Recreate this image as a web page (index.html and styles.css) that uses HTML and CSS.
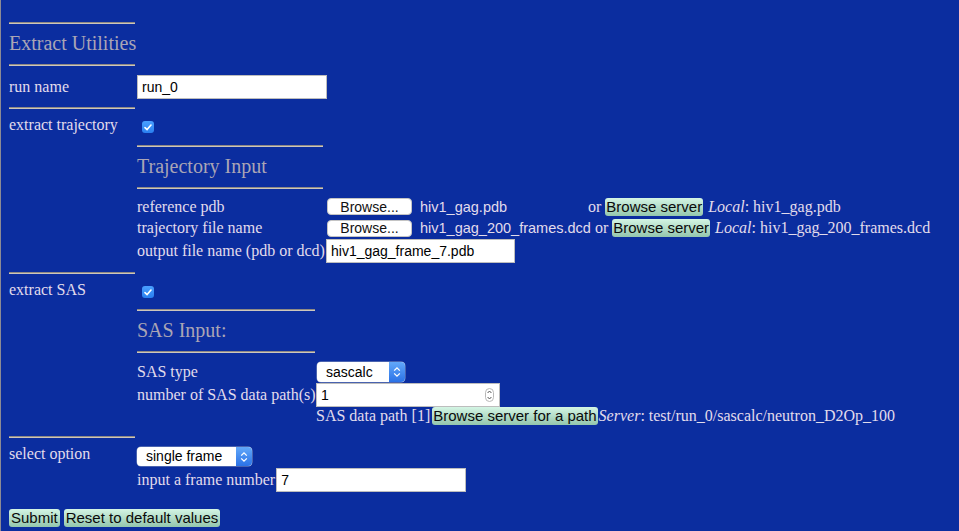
FILE: index.html
```html
<!DOCTYPE html>
<html>
<head>
<meta charset="utf-8">
<title>Extract Utilities</title>
<link rel="stylesheet" href="styles.css">
</head>
<body>
<div class="page">
  <div class="rule left"></div>
  <h1 class="title">Extract Utilities</h1>
  <div class="rule left"></div>

  <div class="row run">
    <div class="lbl">run name</div>
    <span class="txt w190">run_0</span>
  </div>
  <div class="rule left"></div>

  <div class="row sect">
    <div class="lbl top">extract trajectory</div>
    <div class="body">
      <div class="chkline"><span class="chk"><svg width="8" height="7" viewBox="0 0 8 7"><path d="M1 3.6 L3.1 5.6 L7 1" stroke="#fff" stroke-width="1.6" fill="none" stroke-linecap="round" stroke-linejoin="round"/></svg></span></div>
      <div class="rule w186"></div>
      <h2 class="title">Trajectory Input</h2>
      <div class="rule w186"></div>
      <div class="sub tsub">
        <div class="cell">reference pdb</div>
        <div class="cell">
          <span class="file"><span class="browse">Browse...</span><span class="fname">hiv1_gag.pdb</span></span>
          <span class="or">or</span><span class="gbtn">Browse server</span><span class="loc"><i>Local</i>: hiv1_gag.pdb</span>
        </div>
        <div class="cell">trajectory file name</div>
        <div class="cell">
          <span class="file"><span class="browse">Browse...</span><span class="fname">hiv1_gag_200_frames.dcd</span></span>
          <span class="or">or</span><span class="gbtn">Browse server</span><span class="loc"><i>Local</i>: hiv1_gag_200_frames.dcd</span>
        </div>
        <div class="cell">output file name (pdb or dcd)</div>
        <div class="cell"><span class="txt w189">hiv1_gag_frame_7.pdb</span></div>
      </div>
    </div>
  </div>
  <div class="rule left"></div>

  <div class="row sect">
    <div class="lbl top">extract SAS</div>
    <div class="body">
      <div class="chkline sas"><span class="chk"><svg width="8" height="7" viewBox="0 0 8 7"><path d="M1 3.6 L3.1 5.6 L7 1" stroke="#fff" stroke-width="1.6" fill="none" stroke-linecap="round" stroke-linejoin="round"/></svg></span></div>
      <div class="rule w178"></div>
      <h2 class="title">SAS Input:</h2>
      <div class="rule w178"></div>
      <div class="sub ssub">
        <div class="cell">SAS type</div>
        <div class="cell">
          <span class="sel w88"><span class="sel-t">sascalc</span><span class="sel-b"><svg width="8" height="12" viewBox="0 0 8 12"><path d="M1.2 4.6 L4 1.8 L6.8 4.6 M1.2 7.4 L4 10.2 L6.8 7.4" stroke="#fff" stroke-width="1.3" fill="none"/></svg></span></span>
        </div>
        <div class="cell">number of SAS data path(s)</div>
        <div class="cell">
          <span class="txt w184 num">1<svg class="spin" width="9" height="14" viewBox="0 0 9 14"><rect x="0.5" y="0.5" width="8" height="13" rx="4" fill="#fff" stroke="#b8b8b8"/><path d="M2.6 5 L4.5 3 L6.4 5 M2.6 9 L4.5 11 L6.4 9" stroke="#555" stroke-width="1" fill="none"/></svg></span>
        </div>
        <div class="cell"></div>
        <div class="cell">SAS data path [1]<span class="gbtn path">Browse server for a path</span><span class="loc2"><i>Server</i>: test/run_0/sascalc/neutron_D2Op_100</span></div>
      </div>
    </div>
  </div>
  <div class="rule left"></div>

  <div class="row opt">
    <div class="lbl top">select option</div>
    <div class="body">
      <span class="sel w115"><span class="sel-t">single frame</span><span class="sel-b"><svg width="8" height="12" viewBox="0 0 8 12"><path d="M1.2 4.6 L4 1.8 L6.8 4.6 M1.2 7.4 L4 10.2 L6.8 7.4" stroke="#fff" stroke-width="1.3" fill="none"/></svg></span></span>
      <div class="frame">input a frame number<span class="txt w190">7</span></div>
    </div>
  </div>

  <div class="actions">
    <span class="gbtn big">Submit</span><span class="gbtn big">Reset to default values</span>
  </div>
</div>
</body>
</html>
```

FILE: styles.css
```css
html, body {
  margin: 0;
  padding: 0;
  background: #0b2d9f;
}
body {
  font-family: "Liberation Serif", "Times New Roman", serif;
  font-size: 16px;
  line-height: 18px;
  color: #e2dcec;
}
.page {
  border-left: 1px solid #8c8a94;
  padding: 22px 0 0 8px;
  min-height: 531px;
  box-sizing: border-box;
}
.rule {
  height: 0;
  border-top: 1px solid #8f8a84;
  border-bottom: 1px solid #cdc6bc;
}
.rule.left { width: 126px; }
.rule.w186 { width: 186px; }
.rule.w178 { width: 178px; }

.title {
  margin: 0;
  font-weight: normal;
  font-size: 20px;
  line-height: 24px;
  height: 40px;
  box-sizing: border-box;
  padding-top: 7px;
  color: #aaa5b5;
}

.row { display: flex; }
.lbl { width: 128px; flex: none; white-space: nowrap; }
.lbl.top { padding-top: 7px; }

.run { height: 41px; align-items: center; }

.chkline { height: 36px; box-sizing: border-box; padding: 12px 0 0 5px; }
.chkline.sas { height: 35px; }
.chk {
  display: flex;
  width: 12px;
  height: 12px;
  border-radius: 3px;
  background: linear-gradient(#4aa0ff, #2a7ff0);
  align-items: center;
  justify-content: center;
}

.sub { display: grid; align-items: center; white-space: nowrap; }
.cell { display: flex; align-items: center; height: 100%; }
.tsub {
  grid-template-columns: 189px auto;
  grid-template-rows: 21px 22px 24px;
  padding: 7px 0 9px;
}
.ssub {
  grid-template-columns: 179px auto;
  grid-template-rows: 23px 24px 18px;
  padding: 7px 0 11px;
}

.txt {
  display: inline-flex;
  align-items: center;
  box-sizing: border-box;
  height: 24px;
  background: #fff;
  border: 1px solid #bdbdbd;
  font-family: "Liberation Sans", Arial, sans-serif;
  font-size: 14px;
  color: #000;
  padding: 0 4px;
}
.w190 { width: 190px; }
.w189 { width: 189px; }
.w184 { width: 184px; }
.num { justify-content: space-between; padding-left: 4px; padding-right: 5px; }

.file {
  display: inline-flex;
  align-items: center;
  min-width: 257px;
  margin-left: 1px;
}
.browse {
  display: inline-flex;
  align-items: center;
  justify-content: center;
  width: 85px;
  height: 17px;
  box-sizing: border-box;
  background: #fff;
  border: 1px solid #c4c4c4;
  border-radius: 4px;
  font-family: "Liberation Sans", Arial, sans-serif;
  font-size: 14px;
  color: #111;
}
.fname {
  margin-left: 8px;
  font-family: "Liberation Sans", Arial, sans-serif;
  font-size: 14.5px;
  color: #e2dcec;
}
.or { margin: 0 4px 0 4px; }
.gbtn {
  display: inline-flex;
  align-items: center;
  height: 18px;
  box-sizing: border-box;
  padding: 0 1px;
  border-radius: 3px;
  background: linear-gradient(#d4f5e4, #94c6ad);
  font-family: "Liberation Sans", Arial, sans-serif;
  font-size: 15px;
  color: #0a0a0a;
}
.loc { margin-left: 5px; }
.gbtn.path { margin-left: 2px; }
.loc2 { margin-left: 1px; }

.sel {
  display: inline-flex;
  height: 20px;
  border-radius: 4px;
  background: #fff;
  overflow: hidden;
  font-family: "Liberation Sans", Arial, sans-serif;
  font-size: 14px;
  color: #000;
  box-shadow: 0 0 0 0.5px #8a9ac0;
}
.sel.w88 { width: 88px; margin-left: 1px; }
.sel.w115 { width: 115px; height: 19px; margin-top: 9px; }
.sel-t { flex: 1; padding-left: 9px; line-height: 20px; }
.sel.w115 .sel-t { line-height: 19px; }
.sel-b {
  width: 16px;
  flex: none;
  display: flex;
  align-items: center;
  justify-content: center;
  background: linear-gradient(#62a8fa, #2b72e6);
}

.opt .body { display: flex; flex-direction: column; align-items: flex-start; }
.frame { display: flex; align-items: center; margin-top: 2px; white-space: nowrap; }
.frame .txt { margin-left: 1px; }

.actions { display: flex; gap: 4px; margin-top: 17px; }
.gbtn.big { padding: 0 2px; }
```
